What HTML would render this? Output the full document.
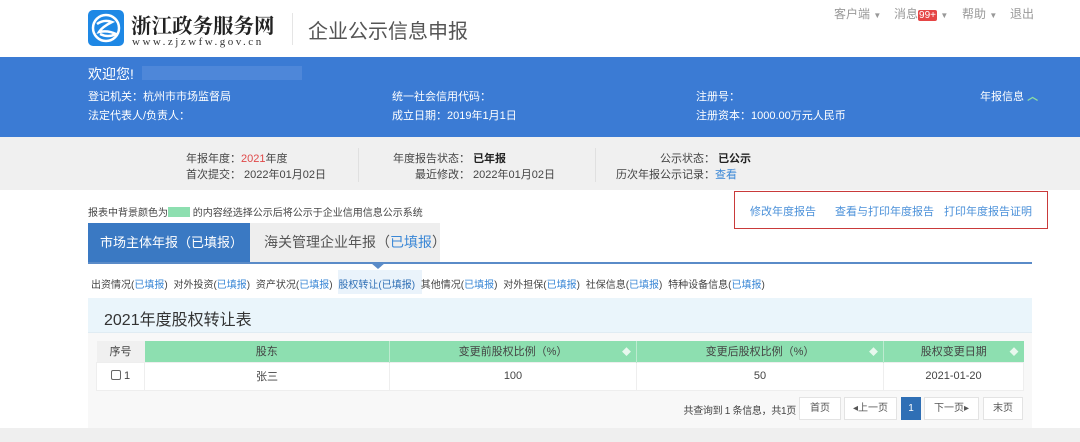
<!DOCTYPE html>
<html><head><meta charset="utf-8"><style>
*{margin:0;padding:0;box-sizing:border-box}
body{width:1080px;height:442px;overflow:hidden;background:#fff;font-family:"Liberation Sans","Noto Sans CJK SC",sans-serif;position:relative;color:#333}
.a{position:absolute;white-space:nowrap}
.w{color:#fff;font-size:11px}
.g{font-size:11px;color:#444}
.b{color:#3a87d6}
td,th{font-weight:normal;font-size:11px;text-align:center;color:#444}
.pg{position:absolute;top:397px;height:23px;border:1px solid #e3e3e3;background:#fff;font-size:10px;color:#555;text-align:center;line-height:21px}
.s{position:absolute;right:5px;top:4px;color:#e8f8ee;font-size:9px}
</style></head><body>
<svg class="a" style="left:88px;top:10px" width="36" height="36" viewBox="0 0 36 36"><rect width="36" height="36" rx="5" fill="#1e88e5"/><circle cx="18" cy="18" r="13" fill="none" stroke="#fff" stroke-width="2.5"/><path d="M9 14 Q16 9 24 12 Q14 17 11 22 Q20 20 28 24 Q20 28 12 24" fill="none" stroke="#fff" stroke-width="2.5"/></svg>
<div class="a" style="left:131px;top:9px;font-size:20.5px;font-weight:bold;color:#222;font-family:'Noto Serif CJK SC',serif">浙江政务服务网</div>
<div class="a" style="left:132px;top:36px;font-size:11px;color:#333;font-family:'Liberation Serif',serif;letter-spacing:2.5px">www.zjzwfw.gov.cn</div>
<div class="a" style="left:292px;top:13px;width:1px;height:32px;background:#e5e5e5"></div>
<div class="a" style="left:308px;top:15px;font-size:20px;color:#555">企业公示信息申报</div>
<div class="a" style="left:834px;top:5px;font-size:12px;color:#999">客户端 <span style="font-size:8px">▼</span></div>
<div class="a" style="left:894px;top:5px;font-size:12px;color:#999">消息<span style="background:#e54545;color:#fff;font-size:10px;padding:0 1px;border-radius:2px">99+</span> <span style="font-size:8px">▼</span></div>
<div class="a" style="left:962px;top:5px;font-size:12px;color:#999">帮助 <span style="font-size:8px">▼</span></div>
<div class="a" style="left:1010px;top:5px;font-size:12px;color:#999">退出</div>
<div class="a" style="left:0;top:57px;width:1080px;height:80px;background:#3b7bd4"></div>
<div class="a w" style="left:88px;top:64px;font-size:14px">欢迎您!</div>
<div class="a" style="left:142px;top:66px;width:160px;height:14px;background:#5b8fdc;opacity:.6"></div>
<div class="a w" style="left:88px;top:88px">登记机关：杭州市市场监督局</div>
<div class="a w" style="left:88px;top:107px">法定代表人/负责人：</div>
<div class="a w" style="left:392px;top:88px">统一社会信用代码：</div>
<div class="a w" style="left:392px;top:107px">成立日期：2019年1月1日</div>
<div class="a w" style="left:696px;top:88px">注册号：</div>
<div class="a w" style="left:696px;top:107px">注册资本：1000.00万元人民币</div>
<div class="a w" style="left:980px;top:88px">年报信息 <span style="color:#8fe0a0;font-weight:bold">︿</span></div>
<div class="a" style="left:0;top:137px;width:1080px;height:53px;background:#f0f0f0"></div>
<div class="a g" style="left:186px;top:150px">年报年度：<span style="color:#e04848">2021</span>年度</div>
<div class="a g" style="left:186px;top:166px">首次提交：&nbsp;2022年01月02日</div>
<div class="a" style="left:358px;top:148px;width:1px;height:34px;background:#e0e0e0"></div>
<div class="a g" style="left:393px;top:150px">年度报告状态：&nbsp;<b style="color:#222">已年报</b></div>
<div class="a g" style="left:415px;top:166px">最近修改：&nbsp;2022年01月02日</div>
<div class="a" style="left:595px;top:148px;width:1px;height:34px;background:#e0e0e0"></div>
<div class="a g" style="left:660px;top:150px">公示状态：&nbsp;<b style="color:#222">已公示</b></div>
<div class="a g" style="left:616px;top:166px">历次年报公示记录：<span class="b">查看</span></div>
<div class="a" style="left:88px;top:204px;font-size:10px;color:#444">报表中背景颜色为<span style="display:inline-block;width:22px;height:10px;background:#8ddfb0;vertical-align:-1px"></span>&nbsp;的内容经选择公示后将公示于企业信用信息公示系统</div>
<div class="a" style="left:734px;top:191px;width:314px;height:38px;border:1.5px solid #c93a3a"></div>
<div class="a" style="left:750px;top:203px;font-size:11px;color:#4a90d9">修改年度报告</div>
<div class="a" style="left:835px;top:203px;font-size:11px;color:#4a90d9">查看与打印年度报告</div>
<div class="a" style="left:944px;top:203px;font-size:11px;color:#4a90d9">打印年度报告证明</div>
<div class="a" style="left:88px;top:223px;width:162px;height:39px;background:#3a79c3;color:#fff;font-size:13px;line-height:39px;padding-left:12px">市场主体年报（已填报）</div>
<div class="a" style="left:250px;top:223px;width:190px;height:39px;background:#eeeeee;color:#555;font-size:14px;line-height:39px;padding-left:14px">海关管理企业年报（<span class="b">已填报</span>）</div>
<div class="a" style="left:88px;top:262px;width:944px;height:2px;background:#5a8bc8"></div>
<div class="a" style="left:371px;top:263px;width:0;height:0;border-left:7px solid transparent;border-right:7px solid transparent;border-top:6px solid #5a8bc8"></div>
<div class="a" style="left:338px;top:270px;width:84px;height:24px;background:#eaf3fb"></div>
<div class="a" style="left:91px;top:276px;font-size:10px;color:#444;word-spacing:3px">出资情况(<span class="b">已填报</span>) 对外投资(<span class="b">已填报</span>) 资产状况(<span class="b">已填报</span>) <span style="color:#2f6fb5">股权转让(已填报)</span> 其他情况(<span class="b">已填报</span>) 对外担保(<span class="b">已填报</span>) 社保信息(<span class="b">已填报</span>) 特种设备信息(<span class="b">已填报</span>)</div>
<div class="a" style="left:88px;top:298px;width:944px;height:130px;background:#f8f8f8"></div>
<div class="a" style="left:88px;top:298px;width:944px;height:35px;background:#eaf5fb;border-bottom:1px solid #e0ecf3"></div>
<div class="a" style="left:104px;top:306px;font-size:16px;color:#333">2021年度股权转让表</div>
<table class="a" style="left:96px;top:341px;width:928px;border-collapse:collapse">
<tr style="height:21px"><th style="width:48px;background:#f0f0f0">序号</th><th style="width:245px;background:#8ddfb0">股东</th><th style="width:247px;background:#8ddfb0;border-left:1px solid #bdebd0;position:relative">变更前股权比例（%）<span class="s">◆</span></th><th style="width:247px;background:#8ddfb0;border-left:1px solid #bdebd0;position:relative">变更后股权比例（%）<span class="s">◆</span></th><th style="background:#8ddfb0;border-left:1px solid #bdebd0;position:relative">股权变更日期<span class="s">◆</span></th></tr>
<tr style="height:28px;background:#fff"><td style="border:1px solid #eee"><span style="display:inline-block;width:10px;height:10px;border:1px solid #666;border-radius:2px;vertical-align:-1px"></span> 1</td><td style="border:1px solid #eee">张三</td><td style="border:1px solid #eee">100</td><td style="border:1px solid #eee">50</td><td style="border:1px solid #eee">2021-01-20</td></tr>
</table>
<div class="a" style="right:284px;top:402px;font-size:10px;color:#444;letter-spacing:-0.3px">共查询到 1 条信息，共1页</div>
<div class="pg" style="left:799px;width:42px">首页</div>
<div class="pg" style="left:844px;width:53px">◂上一页</div>
<div class="pg" style="left:901px;width:20px;background:#2f6fb5;border-color:#2f6fb5;color:#fff">1</div>
<div class="pg" style="left:924px;width:55px">下一页▸</div>
<div class="pg" style="left:983px;width:40px">末页</div>
<div class="a" style="left:0;top:428px;width:1080px;height:14px;background:#efefef"></div>
</body></html>
